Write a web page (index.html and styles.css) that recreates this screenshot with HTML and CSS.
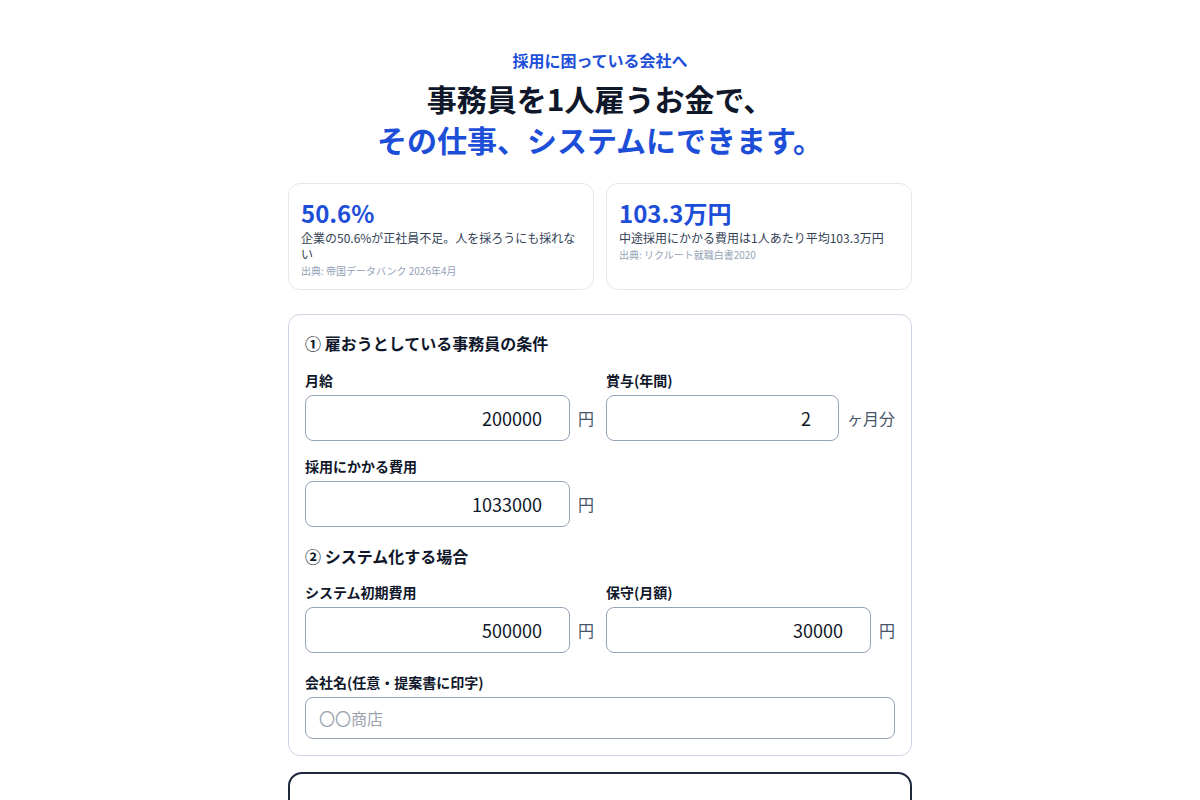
FILE: index.html
```html
<!DOCTYPE html>
<html lang="ja">
<head>
<meta charset="utf-8">
<title>採用コスト比較</title>
<link rel="stylesheet" href="styles.css">
</head>
<body>
<main class="page">
  <header class="hero">
    <p class="eyebrow">採用に困っている会社へ</p>
    <h1 class="title"><span class="title-dark">事務員を1人雇うお金で、</span><span class="title-blue">その仕事、システムにできます。</span></h1>
  </header>

  <section class="stats">
    <div class="stat">
      <div class="stat-num">50.6%</div>
      <div class="stat-desc">企業の50.6%が正社員不足。人を採ろうにも採れない</div>
      <div class="stat-src">出典: 帝国データバンク 2026年4月</div>
    </div>
    <div class="stat">
      <div class="stat-num">103.3万円</div>
      <div class="stat-desc">中途採用にかかる費用は1人あたり平均103.3万円</div>
      <div class="stat-src">出典: リクルート就職白書2020</div>
    </div>
  </section>

  <section class="form-card">
    <h2 class="sec-title">① 雇おうとしている事務員の条件</h2>
    <div class="grid">
      <div class="field">
        <label class="label">月給</label>
        <div class="input-row"><input class="num" type="text" value="200000"><span class="unit">円</span></div>
      </div>
      <div class="field">
        <label class="label">賞与(年間)</label>
        <div class="input-row"><input class="num" type="text" value="2"><span class="unit unit-wide">ヶ月分</span></div>
      </div>
      <div class="field">
        <label class="label">採用にかかる費用</label>
        <div class="input-row"><input class="num" type="text" value="1033000"><span class="unit">円</span></div>
      </div>
    </div>

    <h2 class="sec-title sec-two">② システム化する場合</h2>
    <div class="grid grid-two">
      <div class="field">
        <label class="label">システム初期費用</label>
        <div class="input-row"><input class="num" type="text" value="500000"><span class="unit">円</span></div>
      </div>
      <div class="field">
        <label class="label">保守(月額)</label>
        <div class="input-row"><input class="num" type="text" value="30000"><span class="unit">円</span></div>
      </div>
    </div>

    <div class="field field-company">
      <label class="label">会社名(任意・提案書に印字)</label>
      <input class="text" type="text" placeholder="〇〇商店">
    </div>
  </section>

  <section class="result-card"></section>
</main>
</body>
</html>
```

FILE: styles.css
```css
* { box-sizing: border-box; }
html, body { margin: 0; padding: 0; background: #ffffff; }
body {
  font-family: "Noto Sans CJK JP", "Noto Sans", sans-serif;
  color: #0f172a;
}
.page {
  width: 624px;
  margin: 0 auto;
  padding-top: 48px;
}
.hero { text-align: center; }
.eyebrow {
  margin: 0;
  font-size: 16px;
  font-weight: 700;
  line-height: 24px;
  color: #1d4ed8;
}
.title {
  margin: 6px 0 0;
  font-size: 30px;
  font-weight: 700;
  line-height: 41px;
  color: #0f172a;
}
.title span { display: block; }
.title-blue { color: #1d4ed8; }

.stats {
  display: grid;
  grid-template-columns: minmax(0, 1fr) minmax(0, 1fr);
  gap: 12px;
  margin-top: 23px;
}
.stat {
  border: 1px solid #e2e8f0;
  border-radius: 12px;
  padding: 13px 12px 12px;
  height: 107px;
}
.stat-num {
  font-size: 24px;
  font-weight: 700;
  line-height: 32px;
  color: #1d4ed8;
}
.stat-desc {
  font-size: 12px;
  line-height: 16px;
  color: #334155;
  margin-top: 1px;
}
.stat-src {
  font-size: 10px;
  line-height: 15px;
  color: #94a3b8;
  margin-top: 1px;
}

.form-card {
  margin-top: 24px;
  border: 1px solid #cbd5e1;
  border-radius: 12px;
  padding: 16px;
}
.sec-title {
  margin: 0;
  font-size: 16px;
  font-weight: 700;
  line-height: 24px;
  color: #0f172a;
}
.sec-two { margin-top: 17px; }
.grid {
  display: grid;
  grid-template-columns: minmax(0, 1fr) minmax(0, 1fr);
  column-gap: 12px;
  row-gap: 15px;
  margin-top: 15px;
}
.grid-two { margin-top: 14px; }
.field { display: flex; flex-direction: column; min-width: 0; }
.label {
  font-size: 14px;
  font-weight: 700;
  line-height: 20px;
  color: #0f172a;
  margin-bottom: 5px;
}
.input-row {
  display: flex;
  align-items: center;
  gap: 8px;
}
.num {
  flex: 1 1 0;
  width: 0;
  min-width: 0;
  height: 46px;
  border: 1px solid #94a3b8;
  border-radius: 8px;
  padding: 0 27px 0 12px;
  font-family: "Noto Sans CJK JP", "Noto Sans", sans-serif;
  font-size: 18px;
  color: #0f172a;
  text-align: right;
  background: #fff;
}
.unit {
  flex: none;
  font-size: 16px;
  color: #475569;
  white-space: nowrap;
  width: 16px;
}
.unit-wide { width: 48px; }
.field-company { margin-top: 19px; }
.text {
  height: 42px;
  border: 1px solid #94a3b8;
  border-radius: 8px;
  padding: 0 13px;
  font-family: "Noto Sans CJK JP", "Noto Sans", sans-serif;
  font-size: 16px;
  color: #0f172a;
  background: #fff;
}
.text::placeholder { color: #9ca3af; }

.result-card {
  margin-top: 16px;
  border: 2px solid #1e293b;
  border-radius: 14px;
  height: 200px;
}
```
